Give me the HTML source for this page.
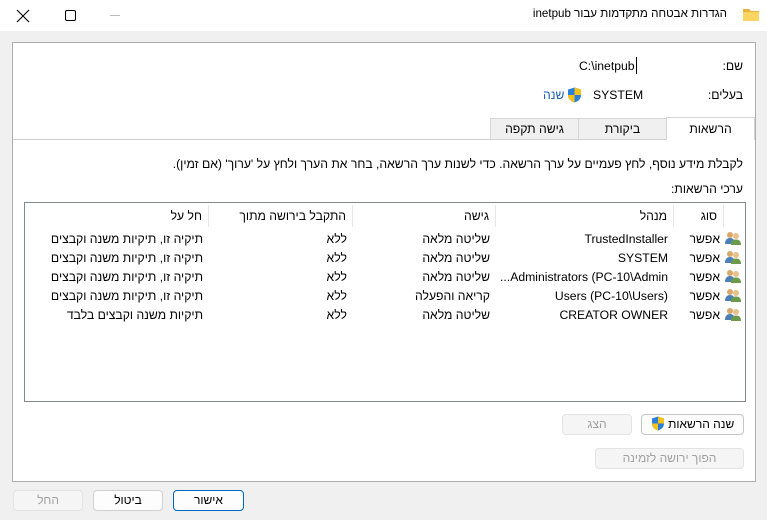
<!DOCTYPE html>
<html><head><meta charset="utf-8"><style>
*{margin:0;padding:0;box-sizing:border-box}
body{width:767px;height:520px;overflow:hidden;background:#f0f0f0;font-family:"Liberation Sans","Noto Sans CJK SC",sans-serif;font-size:12.2px;color:#000;position:relative}
.a{position:absolute;white-space:nowrap}
.r{direction:rtl}
.btn{position:absolute;border:1px solid #d0d0d0;border-radius:4px;background:#fdfdfd;text-align:center;line-height:19px;font-size:12px}
.dis{color:#a0a0a0;background:#f5f5f5;border-color:#e3e3e3}
.hd{position:absolute;top:2px;height:22px;line-height:22px;border-left:1px solid #e5e5e5;direction:rtl;padding-right:6px}
.icon{position:absolute;left:0;width:16px;height:14px}
</style></head><body>
<div class="a" style="left:0;top:0;width:767px;height:31px;background:#fff"></div>
<svg class="a" style="left:16px;top:9px" width="14" height="14"><path d="M1 1L13 13M13 1L1 13" stroke="#000" stroke-width="1.1"/></svg>
<div class="a" style="left:65px;top:10px;width:11px;height:11px;border:1px solid #000;border-radius:2px"></div>
<div class="a" style="left:110px;top:15px;width:10px;height:1px;background:#bbb"></div>
<div class="a r" style="right:40px;top:7px;font-size:11.6px">הגדרות אבטחה מתקדמות עבור inetpub</div>
<svg class="a" style="left:742px;top:7px" width="18" height="15"><path d="M1 2h6l2 2h8v10H1z" fill="#e8b33b"/><path d="M1 5h16v9H1z" fill="#fcd462"/></svg>

<div class="a" style="left:12px;top:42px;width:744px;height:440px;background:#fff;border:1px solid #adadad"></div>
<div class="a r" style="right:24px;top:59px">שם:</div>
<div class="a" style="left:579px;top:59px">C:\inetpub</div>
<div class="a" style="left:636px;top:57px;width:1px;height:17px;background:#000"></div>
<div class="a r" style="right:24px;top:88px">בעלים:</div>
<div class="a" style="left:593px;top:88px">SYSTEM</div>
<svg class="a" style="left:567px;top:87px" width="15" height="16"><path d="M7.5 0.5L14 2.5V8c0 4-3 6.5-6.5 7.5C4 14.5 1 12 1 8V2.5z" fill="#2a7fd8"/><path d="M7.5 0.5V8H14V2.5zM1 8h6.5v7.5C4 14.5 1 12 1 8z" fill="#f5c21b"/></svg>
<div class="a r" style="left:543px;top:88px;color:#1a5fb4">שנה</div>

<div class="a" style="left:13px;top:139px;width:742px;height:1px;background:#d0d0d0"></div>
<div class="a r" style="left:490px;top:118px;width:89px;height:21px;background:#f0f0f0;border:1px solid #d6d6d6;border-bottom:none;text-align:center;line-height:20px">גישה תקפה</div>
<div class="a" style="left:578px;top:118px;width:89px;height:21px;background:#f0f0f0;border:1px solid #d6d6d6;border-bottom:none;text-align:center;line-height:20px">ביקורת</div>
<div class="a" style="left:666px;top:117px;width:89px;height:23px;background:#fff;border:1px solid #d6d6d6;border-bottom:none;text-align:center;line-height:22px">הרשאות</div>

<div class="a r" style="right:24px;top:157px">לקבלת מידע נוסף, לחץ פעמיים על ערך הרשאה. כדי לשנות ערך הרשאה, בחר את הערך ולחץ על 'ערוך' (אם זמין).</div>
<div class="a r" style="right:24px;top:182px">ערכי הרשאות:</div>

<div class="a" style="left:24px;top:202px;width:722px;height:200px;border:1px solid #828790;background:#fff">
 <div class="hd" style="right:0;width:22px"></div>
 <div class="hd" style="right:22px;width:50px">סוג</div>
 <div class="hd" style="right:72px;width:178px">מנהל</div>
 <div class="hd" style="right:250px;width:143px">גישה</div>
 <div class="hd" style="right:393px;width:144px">התקבל בירושה מתוך</div>
 <div class="hd" style="right:537px;width:183px;border-left:none">חל על</div>
</div>
<div class="a" style="left:24px;top:229px;width:722px">
 <div style="position:relative;height:19px">
  <svg class="icon" style="left:701px;top:2px" width="16" height="14"><circle cx="5" cy="4" r="3" fill="#d9a86c"/><path d="M0 13c0-4 2-6 5-6s5 2 5 6z" fill="#4c7fb8"/><circle cx="11" cy="5" r="3" fill="#e8c08a"/><path d="M6 14c0-4 2-5.5 5-5.5s5 1.5 5 5.5z" fill="#6a9a4a"/></svg>
  <span class="a r" style="right:26px;top:3px">אפשר</span><span class="a" style="right:78px;top:3px">TrustedInstaller</span><span class="a r" style="right:256px;top:3px">שליטה מלאה</span><span class="a r" style="right:399px;top:3px">ללא</span><span class="a r" style="right:543px;top:3px">תיקיה זו, תיקיות משנה וקבצים</span>
 </div>
 <div style="position:relative;height:19px">
  <svg class="icon" style="left:701px;top:2px" width="16" height="14"><circle cx="5" cy="4" r="3" fill="#d9a86c"/><path d="M0 13c0-4 2-6 5-6s5 2 5 6z" fill="#4c7fb8"/><circle cx="11" cy="5" r="3" fill="#e8c08a"/><path d="M6 14c0-4 2-5.5 5-5.5s5 1.5 5 5.5z" fill="#6a9a4a"/></svg>
  <span class="a r" style="right:26px;top:3px">אפשר</span><span class="a" style="right:78px;top:3px">SYSTEM</span><span class="a r" style="right:256px;top:3px">שליטה מלאה</span><span class="a r" style="right:399px;top:3px">ללא</span><span class="a r" style="right:543px;top:3px">תיקיה זו, תיקיות משנה וקבצים</span>
 </div>
 <div style="position:relative;height:19px">
  <svg class="icon" style="left:701px;top:2px" width="16" height="14"><circle cx="5" cy="4" r="3" fill="#d9a86c"/><path d="M0 13c0-4 2-6 5-6s5 2 5 6z" fill="#4c7fb8"/><circle cx="11" cy="5" r="3" fill="#e8c08a"/><path d="M6 14c0-4 2-5.5 5-5.5s5 1.5 5 5.5z" fill="#6a9a4a"/></svg>
  <span class="a r" style="right:26px;top:3px">אפשר</span><span class="a" style="right:78px;top:3px">...Administrators (PC-10\Admin</span><span class="a r" style="right:256px;top:3px">שליטה מלאה</span><span class="a r" style="right:399px;top:3px">ללא</span><span class="a r" style="right:543px;top:3px">תיקיה זו, תיקיות משנה וקבצים</span>
 </div>
 <div style="position:relative;height:19px">
  <svg class="icon" style="left:701px;top:2px" width="16" height="14"><circle cx="5" cy="4" r="3" fill="#d9a86c"/><path d="M0 13c0-4 2-6 5-6s5 2 5 6z" fill="#4c7fb8"/><circle cx="11" cy="5" r="3" fill="#e8c08a"/><path d="M6 14c0-4 2-5.5 5-5.5s5 1.5 5 5.5z" fill="#6a9a4a"/></svg>
  <span class="a r" style="right:26px;top:3px">אפשר</span><span class="a" style="right:78px;top:3px">Users (PC-10\Users)</span><span class="a r" style="right:256px;top:3px">קריאה והפעלה</span><span class="a r" style="right:399px;top:3px">ללא</span><span class="a r" style="right:543px;top:3px">תיקיה זו, תיקיות משנה וקבצים</span>
 </div>
 <div style="position:relative;height:19px">
  <svg class="icon" style="left:701px;top:2px" width="16" height="14"><circle cx="5" cy="4" r="3" fill="#d9a86c"/><path d="M0 13c0-4 2-6 5-6s5 2 5 6z" fill="#4c7fb8"/><circle cx="11" cy="5" r="3" fill="#e8c08a"/><path d="M6 14c0-4 2-5.5 5-5.5s5 1.5 5 5.5z" fill="#6a9a4a"/></svg>
  <span class="a r" style="right:26px;top:3px">אפשר</span><span class="a" style="right:78px;top:3px">CREATOR OWNER</span><span class="a r" style="right:256px;top:3px">שליטה מלאה</span><span class="a r" style="right:399px;top:3px">ללא</span><span class="a r" style="right:543px;top:3px">תיקיות משנה וקבצים בלבד</span>
 </div>
</div>

<div class="btn r" style="left:641px;top:414px;width:103px;height:21px;border-color:#c5c5c5">שנה הרשאות <svg style="vertical-align:-3px" width="14" height="15"><path d="M7 0.5L13 2.5V7.5c0 4-3 6-6 7C4 13.5 1 11.5 1 7.5V2.5z" fill="#2a7fd8"/><path d="M7 0.5V7.5H13V2.5zM1 7.5h6v7C4 13.5 1 11.5 1 7.5z" fill="#f5c21b"/></svg></div>
<div class="btn dis" style="left:562px;top:414px;width:70px;height:21px">הצג</div>
<div class="btn dis r" style="left:595px;top:448px;width:149px;height:21px">הפוך ירושה לזמינה</div>

<div class="btn" style="left:173px;top:490px;width:71px;height:21px;border:1px solid #0067c0">אישור</div>
<div class="btn" style="left:93px;top:490px;width:70px;height:21px">ביטול</div>
<div class="btn dis" style="left:13px;top:490px;width:70px;height:21px">החל</div>
</body></html>
